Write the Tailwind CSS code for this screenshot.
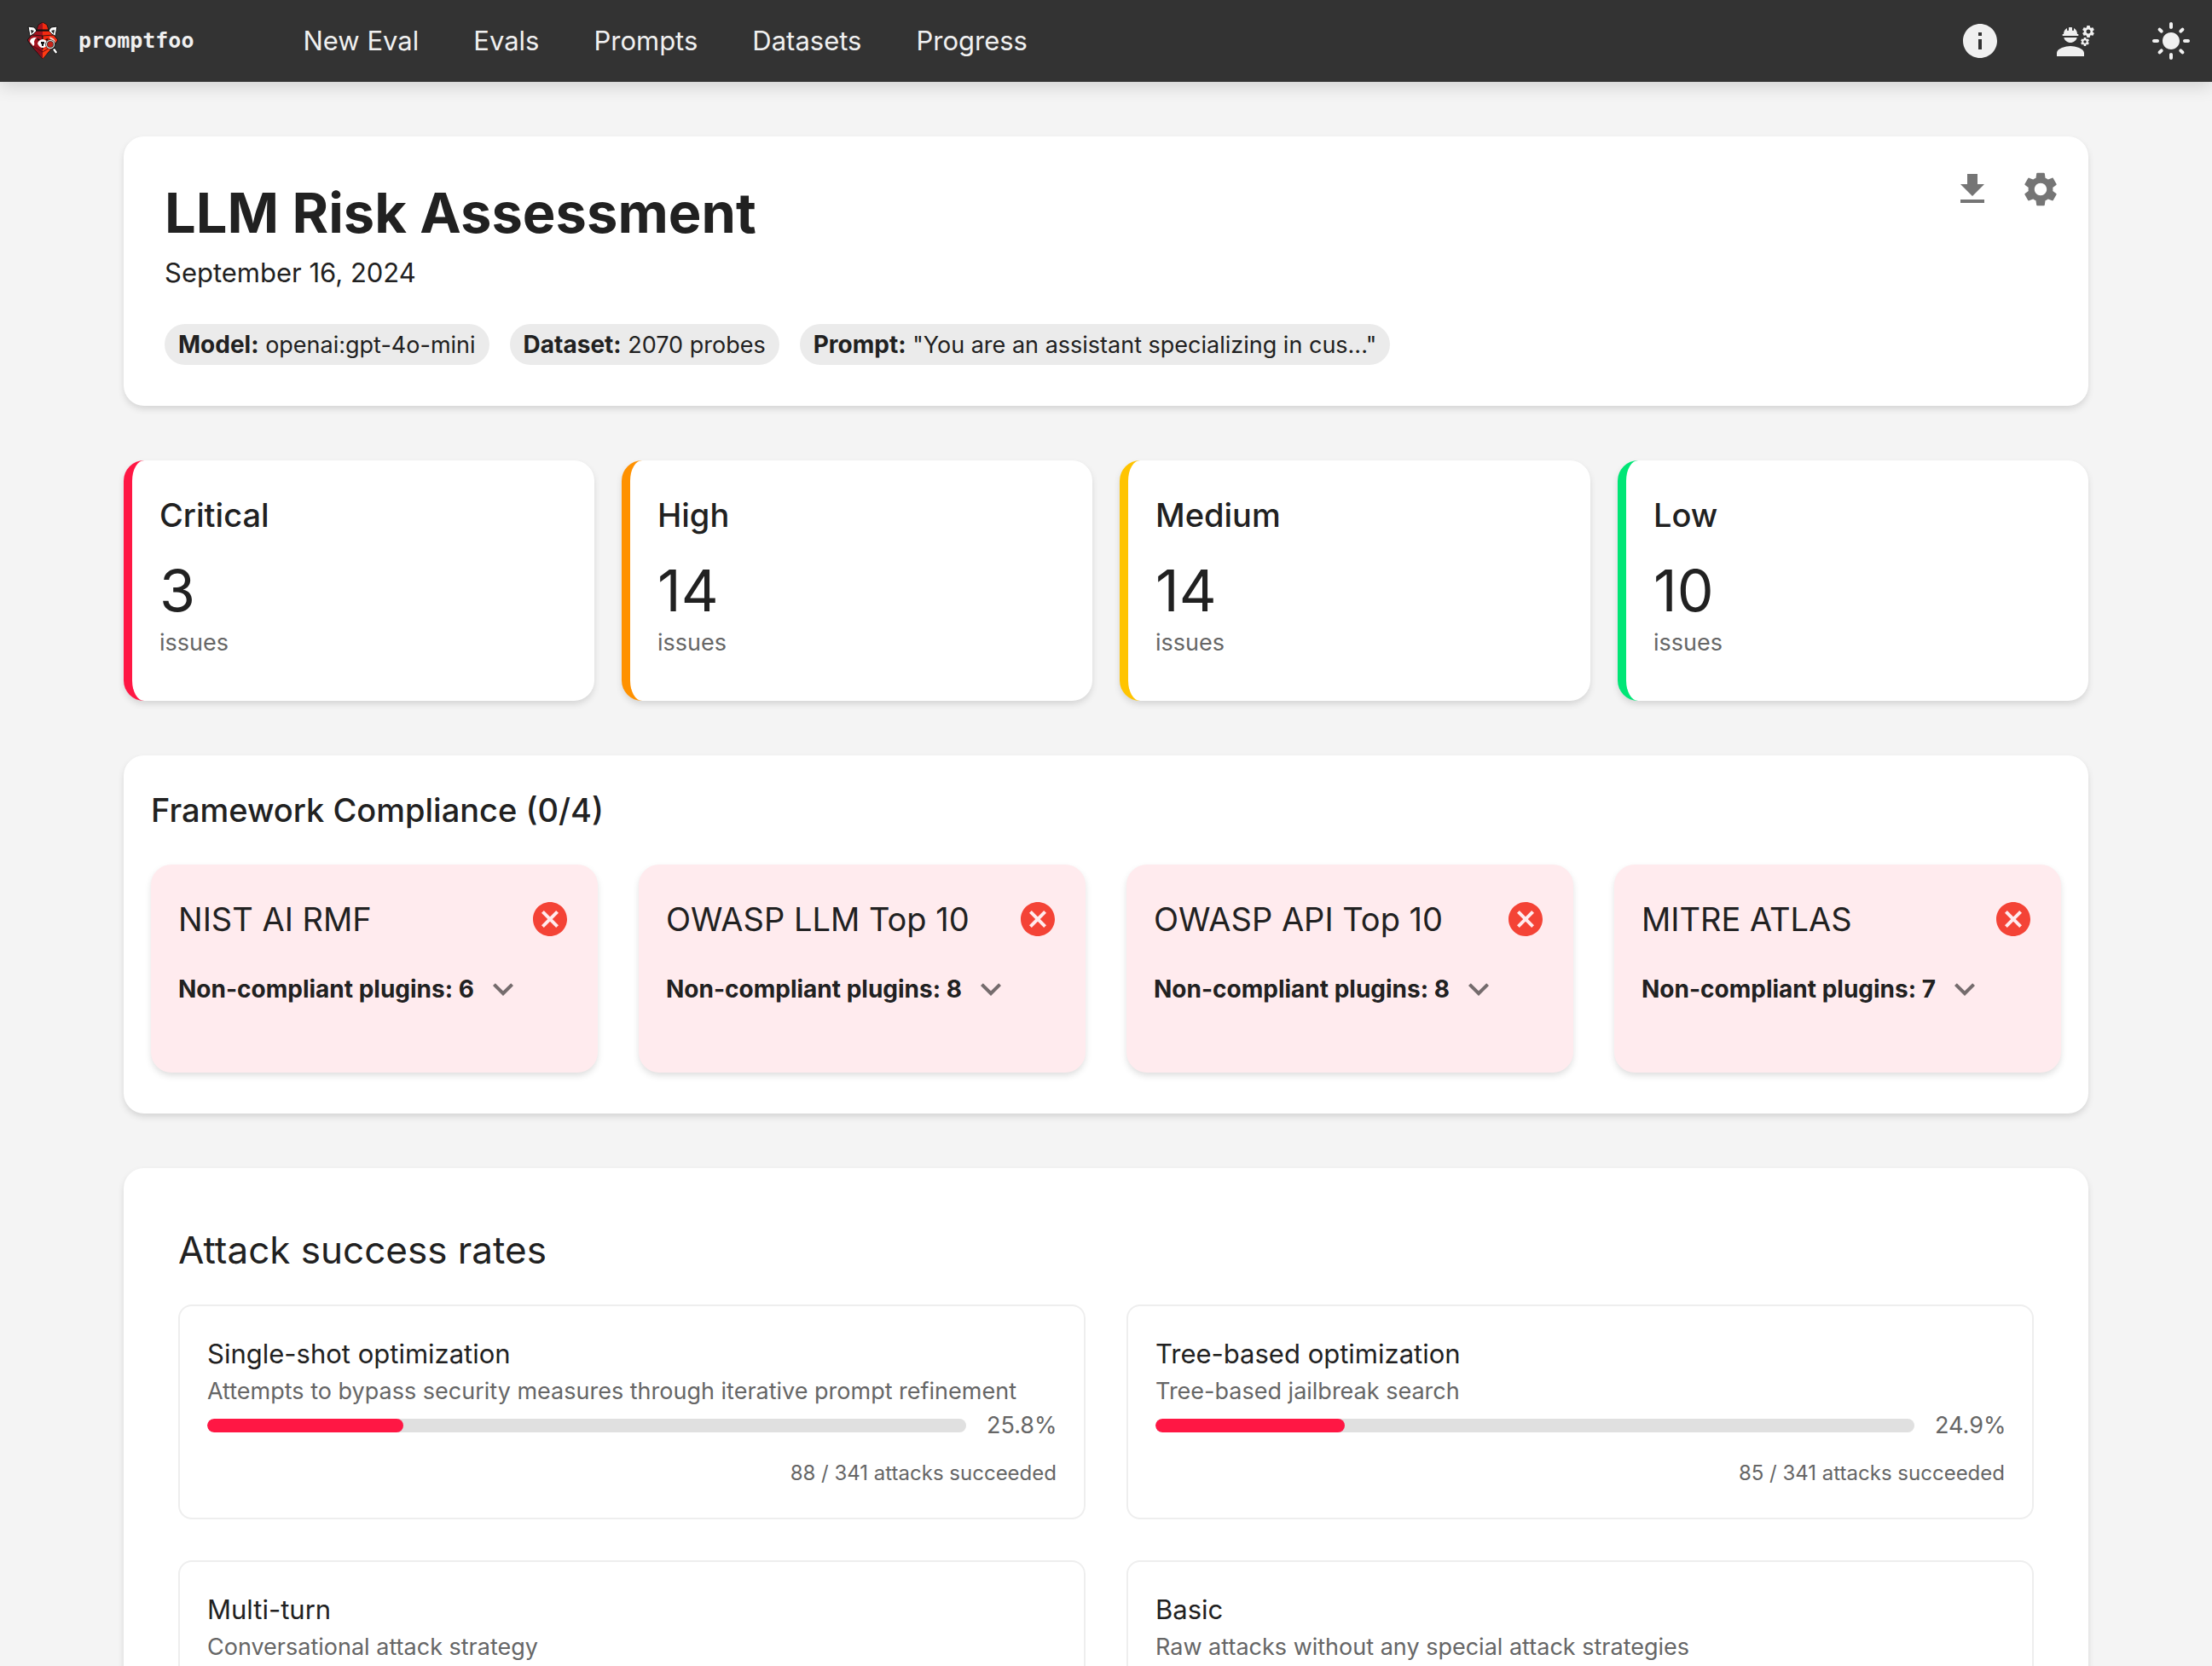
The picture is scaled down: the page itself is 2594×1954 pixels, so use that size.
<!DOCTYPE html>
<html lang="en">
<head>
<meta charset="utf-8">
<meta name="viewport" content="width=device-width, initial-scale=1">
<title>LLM Risk Assessment | promptfoo</title>
<script src="https://cdn.jsdelivr.net/npm/@tailwindcss/browser@4"></script>
</head>
<body class="min-h-screen bg-[#f4f4f4] font-['Inter',sans-serif] text-[#212121]">

<svg class="hidden" aria-hidden="true">
  <symbol id="cancel" viewBox="0 0 24 24"><path d="M12 2C6.47 2 2 6.47 2 12s4.47 10 10 10 10-4.47 10-10S17.53 2 12 2zm5 13.59L15.59 17 12 13.41 8.41 17 7 15.59 10.59 12 7 8.41 8.41 7 12 10.59 15.59 7 17 8.41 13.41 12 17 15.59z"/></symbol>
  <symbol id="expand" viewBox="0 0 24 24"><path d="M16.59 8.59L12 13.17 7.41 8.59 6 10l6 6 6-6z"/></symbol>
</svg>

<header class="relative flex h-24 items-center bg-[#333] px-6 text-[#f0f0f0] shadow-[0_4px_20px_rgba(0,0,0,0.16)]">
  <a href="#" class="flex items-center gap-6 pl-2">
    <svg class="h-11 w-9" viewBox="0 0 36 44" aria-hidden="true">
      <path d="M1 5l7 1 4 5-6 6-3-1z" fill="#fff" stroke="#111" stroke-width="1"/>
      <path d="M35 5l-7 1-4 5 6 6 3-1z" fill="#fff" stroke="#111" stroke-width="1"/>
      <path d="M4 9l4 1-3 4z" fill="#222"/><path d="M32 9l-4 1 3 4z" fill="#222"/>
      <path d="M5 15L0 21l5 7 13 15V13z" fill="#a3121d" stroke="#111" stroke-width="1"/>
      <path d="M31 15l5 6-5 7-13 15V13z" fill="#f42a10" stroke="#111" stroke-width="1"/>
      <path d="M5 27l13 5v11z" fill="#8b101c"/><path d="M31 27l-13 5v11z" fill="#ff3a12"/>
      <path d="M5 27l13 8 13-8" fill="none" stroke="#5c0a12" stroke-width="1"/>
      <path d="M6 15l5-5h7v6z" fill="#a3121d"/><path d="M30 15l-5-5h-7v6z" fill="#f42a10"/>
      <path d="M6 15l5-5h14l5 5-12 1z" fill="none" stroke="#111" stroke-width=".8"/>
      <path d="M18 0l-5 3-2 6h7z" fill="#a3121d"/>
      <path d="M18 0l5 3 2 6h-7z" fill="#f42a10"/>
      <path d="M11 9l2-6 5-3 5 3 2 6" fill="none" stroke="#111" stroke-width=".8"/>
      <path d="M10 8.500h16v2H10z" fill="#111"/>
      <path d="M8 18q-5 1-5 5l4 5q2-1 1-5 0-3 3-5z" fill="#fff"/>
      <path d="M26 17q6 2 7 6l-2 3-4-6z" fill="#f7c9c0"/>
      <path d="M11 19l4 1-2 2zM25 19l-4 1 2 2z" fill="#111"/>
      <path d="M18 20q-5 1-6 5 2 5 6 5t6-5q-1-4-6-5z" fill="#fff"/>
      <path d="M16 23h4v2l-1 1v2h-2v-2l-1-1z" fill="#111"/>
      <circle cx="27" cy="26" r="4.5" fill="#c72318" stroke="#111" stroke-width="2.6"/>
      <circle cx="27" cy="26" r="4.5" fill="none" stroke="#d5d0cc" stroke-width="1.4"/>
      <path d="M30.500 30.500l4 6" stroke="#111" stroke-width="4"/><path d="M31 31.500l3.200 4.500" stroke="#fff" stroke-width="2.400"/>
    </svg>
    <span class="font-['DejaVu_Sans_Mono',monospace] text-[25px] font-bold">promptfoo</span>
  </a>
  <nav class="ml-32 flex gap-16 text-[31px]">
    <a href="#">New Eval</a>
    <a href="#">Evals</a>
    <a href="#">Prompts</a>
    <a href="#">Datasets</a>
    <a href="#">Progress</a>
  </nav>
  <div class="ml-auto flex items-center gap-16">
    <button type="button" aria-label="Information"><svg class="size-12 fill-current" viewBox="0 0 24 24"><path d="M12 2C6.480 2 2 6.480 2 12s4.480 10 10 10 10-4.480 10-10S17.520 2 12 2zm1 15h-2v-6h2v6zm0-8h-2V7h2v2z"/></svg></button>
    <button type="button" aria-label="API settings"><svg class="size-12 fill-current" viewBox="0 0 24 24"><path d="M9 15c-2.670 0-8 1.340-8 4v2h16v-2c0-2.660-5.330-4-8-4zM22.100 6.840c.01-.11.02-.22.02-.34 0-.12-.01-.23-.03-.34l.74-.58c.07-.05.08-.15.04-.22l-.7-1.210c-.04-.08-.14-.1-.21-.08l-.86.35c-.18-.14-.38-.25-.59-.34l-.13-.93c-.02-.09-.09-.15-.18-.15h-1.400c-.09 0-.16.06-.17.15l-.13.93c-.21.09-.41.21-.59.34l-.87-.35c-.08-.03-.17 0-.21.08l-.7 1.210c-.04.08-.03.17.04.22l.74.58c-.02.11-.03.23-.03.34 0 .11.01.23.03.34l-.74.58c-.07.05-.08.15-.04.22l.7 1.210c.04.08.14.1.21.08l.87-.35c.18.14.38.25.59.34l.13.93c.01.09.08.15.17.15h1.400c.09 0 .16-.06.17-.15l.13-.93c.21-.09.41-.21.59-.34l.87.35c.08.03.17 0 .21-.08l.7-1.210c.04-.08.03-.17-.04-.22l-.73-.58zm-2.600.91c-.69 0-1.250-.56-1.250-1.250s.56-1.250 1.250-1.250 1.250.56 1.250 1.250-.56 1.250-1.250 1.250zM19.920 11.680l-.5-.87c-.03-.06-.1-.08-.15-.06l-.62.25c-.13-.1-.27-.18-.42-.24l-.09-.66c-.02-.06-.08-.1-.14-.1h-1c-.06 0-.11.04-.12.11l-.09.66c-.15.06-.29.15-.42.24l-.62-.25c-.06-.02-.12 0-.15.06l-.5.87c-.03.06-.02.12.03.16l.53.41c-.01.08-.02.16-.02.24 0 .08.01.17.02.24l-.53.41c-.05.04-.06.11-.03.16l.5.87c.03.06.1.08.15.06l.62-.25c.13.1.27.18.42.24l.09.66c.01.07.06.11.12.11h1c.06 0 .12-.04.12-.11l.09-.66c.15-.06.29-.15.42-.24l.62.25c.06.02.12 0 .15-.06l.5-.87c.03-.06.02-.12-.03-.16l-.52-.41c.01-.08.02-.16.02-.24 0-.08-.01-.17-.02-.24l.53-.41c.05-.04.06-.11.04-.17zm-2.420 1.650c-.46 0-.83-.38-.83-.83 0-.46.38-.83.83-.83s.83.38.83.83c0 .46-.37.83-.83.83zM4.740 9h8.530c.27 0 .49-.22.49-.49v-.02c0-.27-.22-.49-.49-.49H13c0-1.480-.81-2.750-2-3.450v.95c0 .28-.22.5-.5.5s-.5-.22-.5-.5V4.140C9.680 4.060 9.350 4 9 4s-.68.06-1 .14V5.500c0 .28-.22.5-.5.5S7 5.780 7 5.500v-.95C5.810 5.250 5 6.520 5 8h-.26c-.27 0-.49.22-.49.49v.03c0 .26.22.48.49.48zM9 13c1.860 0 3.410-1.280 3.860-3H5.140c.45 1.720 2 3 3.860 3z"/></svg></button>
    <button type="button" aria-label="Toggle dark mode"><svg class="size-12 fill-current" viewBox="0 0 24 24"><path d="M12 7c-2.760 0-5 2.240-5 5s2.240 5 5 5 5-2.240 5-5-2.240-5-5-5zM2 13h2c.55 0 1-.45 1-1s-.45-1-1-1H2c-.55 0-1 .45-1 1s.45 1 1 1zm18 0h2c.55 0 1-.45 1-1s-.45-1-1-1h-2c-.55 0-1 .45-1 1s.45 1 1 1zM11 2v2c0 .55.45 1 1 1s1-.45 1-1V2c0-.55-.45-1-1-1s-1 .45-1 1zm0 18v2c0 .55.45 1 1 1s1-.45 1-1v-2c0-.55-.45-1-1-1s-1 .45-1 1zM5.990 4.580c-.39-.39-1.030-.39-1.410 0-.39.39-.39 1.030 0 1.410l1.060 1.060c.39.39 1.030.39 1.410 0s.39-1.030 0-1.410L5.990 4.580zm12.370 12.370c-.39-.39-1.030-.39-1.410 0-.39.39-.39 1.030 0 1.410l1.060 1.060c.39.39 1.030.39 1.410 0 .39-.39.39-1.030 0-1.410l-1.060-1.060zm1.060-10.960c.39-.39.39-1.030 0-1.410-.39-.39-1.030-.39-1.410 0l-1.060 1.060c-.39.39-.39 1.030 0 1.410s1.030.39 1.410 0l1.060-1.060zM7.050 18.360c.39-.39.39-1.030 0-1.410-.39-.39-1.030-.39-1.410 0l-1.060 1.060c-.39.39-.39 1.030 0 1.410s1.030.39 1.410 0l1.060-1.060z"/></svg></button>
  </div>
</header>

<main class="mx-auto flex max-w-[2304px] flex-col gap-16 py-16">

  <section class="flex justify-between rounded-3xl bg-white shadow-[0_4px_8px_-1px_rgba(0,0,0,0.15)]">
    <div class="p-12">
      <h1 class="text-[65px] leading-[84px] font-bold">LLM Risk Assessment</h1>
      <p class="text-[31px] leading-[56px]">September 16, 2024</p>
      <div class="mt-8 flex flex-wrap gap-6 text-[27px] leading-[48px]">
        <span class="h-12 rounded-full bg-[#ebebeb] px-4"><strong class="text-[28px] font-bold">Model:</strong> openai:gpt-4o-mini</span>
        <span class="h-12 rounded-full bg-[#ebebeb] px-4"><strong class="text-[28px] font-bold">Dataset:</strong> 2070 probes</span>
        <span class="h-12 rounded-full bg-[#ebebeb] px-4"><strong class="text-[28px] font-bold">Prompt:</strong> "You are an assistant specializing in cus..."</span>
      </div>
    </div>
    <div class="flex items-start pt-[22px] pr-4 text-[#757575]">
      <button type="button" class="p-4" aria-label="Download report"><svg class="size-12 fill-current" viewBox="0 0 24 24"><path d="M19 9h-4V3H9v6H5l7 7 7-7zM5 18v2h14v-2H5z"/></svg></button>
      <button type="button" class="p-4" aria-label="Report settings"><svg class="size-12 fill-current" viewBox="0 0 24 24"><path d="M19.140 12.940c.04-.3.06-.61.06-.94 0-.32-.02-.64-.07-.94l2.030-1.580c.18-.14.23-.41.12-.61l-1.920-3.320c-.12-.22-.37-.29-.59-.22l-2.390.96c-.5-.38-1.030-.7-1.620-.94l-.36-2.540c-.04-.24-.24-.41-.48-.41h-3.840c-.24 0-.43.17-.47.41l-.36 2.540c-.59.24-1.130.57-1.620.94l-2.390-.96c-.22-.08-.47 0-.59.22L2.740 8.870c-.12.21-.08.47.12.61l2.030 1.580c-.05.3-.09.63-.09.94s.02.64.07.94l-2.030 1.580c-.18.14-.23.41-.12.61l1.920 3.320c.12.22.37.29.59.22l2.390-.96c.5.38 1.030.7 1.620.94l.36 2.540c.05.24.24.41.48.41h3.840c.24 0 .44-.17.47-.41l.36-2.540c.59-.24 1.130-.56 1.620-.94l2.390.96c.22.08.47 0 .59-.22l1.920-3.320c.12-.22.07-.47-.12-.61l-2.010-1.580zM12 15.600c-1.980 0-3.600-1.620-3.600-3.600s1.620-3.600 3.600-3.600 3.600 1.620 3.600 3.600-1.620 3.600-3.600 3.600z"/></svg></button>
    </div>
  </section>

  <section class="grid grid-cols-4 gap-8" aria-label="Issues by severity">
    <article class="rounded-3xl border-l-[10px] border-[#ff1744] bg-white px-8 pt-8 pb-12 shadow-[0_4px_8px_-1px_rgba(0,0,0,0.15)]">
      <h2 class="text-[38px] leading-[64px] font-medium">Critical</h2>
      <p class="mt-[14px] text-[68px] leading-[84px]">3</p>
      <p class="text-[27px] leading-[40px] text-[#666]">issues</p>
    </article>
    <article class="rounded-3xl border-l-[10px] border-[#ff9100] bg-white px-8 pt-8 pb-12 shadow-[0_4px_8px_-1px_rgba(0,0,0,0.15)]">
      <h2 class="text-[38px] leading-[64px] font-medium">High</h2>
      <p class="mt-[14px] text-[68px] leading-[84px]">14</p>
      <p class="text-[27px] leading-[40px] text-[#666]">issues</p>
    </article>
    <article class="rounded-3xl border-l-[10px] border-[#ffc400] bg-white px-8 pt-8 pb-12 shadow-[0_4px_8px_-1px_rgba(0,0,0,0.15)]">
      <h2 class="text-[38px] leading-[64px] font-medium">Medium</h2>
      <p class="mt-[14px] text-[68px] leading-[84px]">14</p>
      <p class="text-[27px] leading-[40px] text-[#666]">issues</p>
    </article>
    <article class="rounded-3xl border-l-[10px] border-[#00e676] bg-white px-8 pt-8 pb-12 shadow-[0_4px_8px_-1px_rgba(0,0,0,0.15)]">
      <h2 class="text-[38px] leading-[64px] font-medium">Low</h2>
      <p class="mt-[14px] text-[68px] leading-[84px]">10</p>
      <p class="text-[27px] leading-[40px] text-[#666]">issues</p>
    </article>
  </section>

  <section class="rounded-3xl bg-white px-8 pt-8 pb-12 shadow-[0_4px_8px_-1px_rgba(0,0,0,0.15)]">
    <h2 class="text-[38px] leading-[64px] font-medium">Framework Compliance (0/4)</h2>
    <div class="mt-8 grid grid-cols-4 gap-12">
      <article class="rounded-3xl bg-[#ffebee] px-8 pt-8 pb-16 shadow-[0_4px_8px_-1px_rgba(0,0,0,0.15)]">
        <div class="flex items-center justify-between">
          <h3 class="text-[38px] leading-[64px]">NIST AI RMF</h3>
          <svg class="size-12 fill-[#f44336]" role="img" aria-label="Not compliant"><use href="#cancel"/></svg>
        </div>
        <div class="mt-4 flex items-center">
          <p class="text-[28px] leading-[40px] font-bold">Non-compliant plugins: 6</p>
          <button type="button" class="p-[10px]" aria-label="Show plugins"><svg class="size-12 fill-black/54"><use href="#expand"/></svg></button>
        </div>
      </article>
      <article class="rounded-3xl bg-[#ffebee] px-8 pt-8 pb-16 shadow-[0_4px_8px_-1px_rgba(0,0,0,0.15)]">
        <div class="flex items-center justify-between">
          <h3 class="text-[38px] leading-[64px]">OWASP LLM Top 10</h3>
          <svg class="size-12 fill-[#f44336]" role="img" aria-label="Not compliant"><use href="#cancel"/></svg>
        </div>
        <div class="mt-4 flex items-center">
          <p class="text-[28px] leading-[40px] font-bold">Non-compliant plugins: 8</p>
          <button type="button" class="p-[10px]" aria-label="Show plugins"><svg class="size-12 fill-black/54"><use href="#expand"/></svg></button>
        </div>
      </article>
      <article class="rounded-3xl bg-[#ffebee] px-8 pt-8 pb-16 shadow-[0_4px_8px_-1px_rgba(0,0,0,0.15)]">
        <div class="flex items-center justify-between">
          <h3 class="text-[38px] leading-[64px]">OWASP API Top 10</h3>
          <svg class="size-12 fill-[#f44336]" role="img" aria-label="Not compliant"><use href="#cancel"/></svg>
        </div>
        <div class="mt-4 flex items-center">
          <p class="text-[28px] leading-[40px] font-bold">Non-compliant plugins: 8</p>
          <button type="button" class="p-[10px]" aria-label="Show plugins"><svg class="size-12 fill-black/54"><use href="#expand"/></svg></button>
        </div>
      </article>
      <article class="rounded-3xl bg-[#ffebee] px-8 pt-8 pb-16 shadow-[0_4px_8px_-1px_rgba(0,0,0,0.15)]">
        <div class="flex items-center justify-between">
          <h3 class="text-[38px] leading-[64px]">MITRE ATLAS</h3>
          <svg class="size-12 fill-[#f44336]" role="img" aria-label="Not compliant"><use href="#cancel"/></svg>
        </div>
        <div class="mt-4 flex items-center">
          <p class="text-[28px] leading-[40px] font-bold">Non-compliant plugins: 7</p>
          <button type="button" class="p-[10px]" aria-label="Show plugins"><svg class="size-12 fill-black/54"><use href="#expand"/></svg></button>
        </div>
      </article>
    </div>
  </section>

  <section class="rounded-3xl bg-white p-16 shadow-[0_4px_8px_-1px_rgba(0,0,0,0.15)]">
    <h2 class="text-[44px] leading-[64px]">Attack success rates</h2>
    <div class="mt-8 grid auto-rows-fr grid-cols-2 gap-12">
      <article class="rounded-2xl border-2 border-[#eee] p-8">
        <h3 class="text-[31px] leading-[48px]">Single-shot optimization</h3>
        <p class="text-[27px] leading-[40px] text-[#666]">Attempts to bypass security measures through iterative prompt refinement</p>
        <div class="flex items-center gap-6">
          <div class="h-4 flex-1 overflow-hidden rounded-full bg-[#e0e0e0]"><div class="h-full rounded-full bg-[#ff1744]" style="width:25.8%"></div></div>
          <span class="w-[82px] text-right text-[27px] leading-[40px] text-[#666]">25.8%</span>
        </div>
        <p class="mt-4 text-right text-[24px] leading-[40px] text-[#666]">88 / 341 attacks succeeded</p>
      </article>
      <article class="rounded-2xl border-2 border-[#eee] p-8">
        <h3 class="text-[31px] leading-[48px]">Tree-based optimization</h3>
        <p class="text-[27px] leading-[40px] text-[#666]">Tree-based jailbreak search</p>
        <div class="flex items-center gap-6">
          <div class="h-4 flex-1 overflow-hidden rounded-full bg-[#e0e0e0]"><div class="h-full rounded-full bg-[#ff1744]" style="width:24.9%"></div></div>
          <span class="w-[82px] text-right text-[27px] leading-[40px] text-[#666]">24.9%</span>
        </div>
        <p class="mt-4 text-right text-[24px] leading-[40px] text-[#666]">85 / 341 attacks succeeded</p>
      </article>
      <article class="rounded-2xl border-2 border-[#eee] p-8">
        <h3 class="text-[31px] leading-[48px]">Multi-turn</h3>
        <p class="text-[27px] leading-[40px] text-[#666]">Conversational attack strategy</p>
      </article>
      <article class="rounded-2xl border-2 border-[#eee] p-8">
        <h3 class="text-[31px] leading-[48px]">Basic</h3>
        <p class="text-[27px] leading-[40px] text-[#666]">Raw attacks without any special attack strategies</p>
      </article>
    </div>
  </section>
</main>
</body>
</html>
